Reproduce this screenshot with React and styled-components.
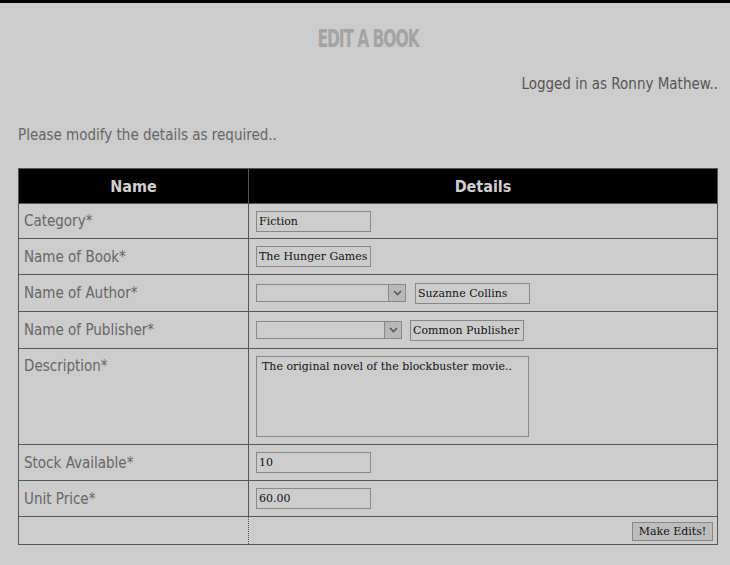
import React from "react";
import styled, { createGlobalStyle } from "styled-components";

const GlobalStyle = createGlobalStyle`
  html, body {
    margin: 0;
    padding: 0;
    background: #cccccc;
  }
  body {
    border-top: 3px solid #000;
    font-family: "DejaVu Sans Condensed", "Liberation Sans", sans-serif;
    color: #555;
  }
`;

const Page = styled.div`
  padding: 0 12px 0 18px;
`;

const Title = styled.h1`
  margin: 0;
  padding: 22px 0 0;
  height: 39px;
  text-align: center;
  font-size: 24px;
  font-weight: bold;
  letter-spacing: -1.5px;
  color: #a3a3a3;
  transform: scaleX(0.72);
`;

const LoggedIn = styled.div`
  text-align: right;
  font-size: 15px;
  color: #555;
  margin-top: 11px;
  height: 22px;
`;

const Intro = styled.p`
  margin: 29px 0 0;
  font-size: 15px;
  color: #666;
  height: 36px;
`;

const Table = styled.table`
  width: 700px;
  border-collapse: collapse;
  border: 1px solid #555;
  margin-top: 6px;
`;

const Head = styled.th`
  background: #000;
  color: #d0d0d0;
  font-size: 16px;
  font-weight: bold;
  height: 34px;
  padding: 0;
  border: 1px solid #555;
  width: ${(p) => p.$w || "auto"};
`;

const Label = styled.td`
  border: 1px solid #555;
  font-size: 15px;
  color: #666;
  padding: 0 0 0 5px;
  height: ${(p) => p.$h || 34}px;
  vertical-align: ${(p) => (p.$top ? "top" : "middle")};
  padding-top: ${(p) => (p.$top ? "8px" : "0")};
  box-sizing: border-box;
  border-right: ${(p) => (p.$dotted ? "1px dotted #555" : "1px solid #555")};
`;

const Field = styled.td`
  border: 1px solid #555;
  padding: 0 4px 0 7px;
  vertical-align: ${(p) => (p.$top ? "top" : "middle")};
  padding-top: ${(p) => (p.$top ? "7px" : "0")};
  text-align: ${(p) => (p.$right ? "right" : "left")};
  border-left: ${(p) => (p.$dotted ? "1px dotted #555" : "1px solid #555")};
`;

const Row = styled.div`
  display: flex;
  align-items: center;
  gap: ${(p) => p.$gap || 9}px;
`;

const TextInput = styled.input`
  box-sizing: border-box;
  display: block;
  width: ${(p) => p.$w || 115}px;
  height: 21px;
  background: #cccccc;
  border: 1px solid #888;
  padding: 0 2px;
  font-family: "DejaVu Serif", serif;
  font-size: 11px;
  color: #111;
  outline: none;
`;

const SelectBox = styled.div`
  box-sizing: border-box;
  width: ${(p) => p.$w}px;
  height: 18px;
  border: 1px solid #888;
  display: flex;
  justify-content: flex-end;
`;

const Arrow = styled.div`
  box-sizing: border-box;
  width: 17px;
  height: 16px;
  border-left: 1px solid #888;
  background: #b8b8b8;
  display: flex;
  align-items: center;
  justify-content: center;
`;

const TextArea = styled.textarea`
  box-sizing: border-box;
  display: block;
  width: 273px;
  height: 81px;
  background: #cccccc;
  border: 1px solid #888;
  padding: 3px 5px;
  font-family: "DejaVu Serif", serif;
  font-size: 11px;
  color: #111;
  resize: none;
  outline: none;
`;

const Button = styled.button`
  box-sizing: border-box;
  width: 81px;
  height: 19px;
  padding: 0;
  background: #bdbdbd;
  border: 1px solid #888;
  font-family: "DejaVu Serif", serif;
  font-size: 11px;
  color: #111;
  vertical-align: middle;
`;

const Select = ({ w }) => (
  <SelectBox $w={w}>
    <Arrow>
      <svg width="9" height="6" viewBox="0 0 9 6">
        <path d="M1 1 L4.5 4.5 L8 1" stroke="#555" strokeWidth="1.6" fill="none" />
      </svg>
    </Arrow>
  </SelectBox>
);

export default function App() {
  return (
    <Page>
      <GlobalStyle />
      <Title>EDIT A BOOK</Title>
      <LoggedIn>Logged in as Ronny Mathew..</LoggedIn>
      <Intro>Please modify the details as required..</Intro>
      <Table>
        <thead>
          <tr>
            <Head $w="229px">Name</Head>
            <Head>Details</Head>
          </tr>
        </thead>
        <tbody>
          <tr>
            <Label $h={35}>Category*</Label>
            <Field><TextInput defaultValue="Fiction" /></Field>
          </tr>
          <tr>
            <Label $h={36}>Name of Book*</Label>
            <Field><TextInput defaultValue="The Hunger Games" /></Field>
          </tr>
          <tr>
            <Label $h={37}>Name of Author*</Label>
            <Field>
              <Row $gap={9}>
                <Select w={150} />
                <TextInput $w={115} defaultValue="Suzanne Collins" />
              </Row>
            </Field>
          </tr>
          <tr>
            <Label $h={37}>Name of Publisher*</Label>
            <Field>
              <Row $gap={8}>
                <Select w={146} />
                <TextInput $w={114} defaultValue="Common Publisher" />
              </Row>
            </Field>
          </tr>
          <tr>
            <Label $h={96} $top>Description*</Label>
            <Field $top>
              <TextArea defaultValue="The original novel of the blockbuster movie.." />
            </Field>
          </tr>
          <tr>
            <Label $h={36}>Stock Available*</Label>
            <Field><TextInput defaultValue="10" /></Field>
          </tr>
          <tr>
            <Label $h={36}>Unit Price*</Label>
            <Field><TextInput defaultValue="60.00" /></Field>
          </tr>
          <tr>
            <Label $h={28} $dotted></Label>
            <Field $right $dotted><Button>Make Edits!</Button></Field>
          </tr>
        </tbody>
      </Table>
    </Page>
  );
}
